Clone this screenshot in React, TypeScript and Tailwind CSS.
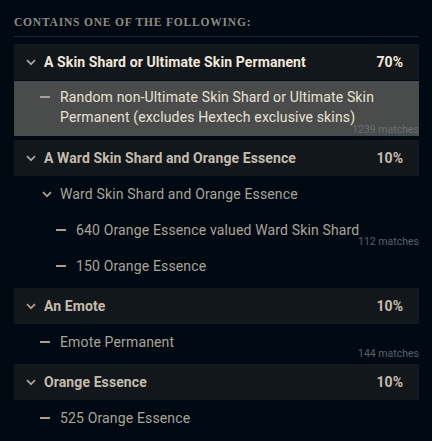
import React from "react";

const Chevron = ({ className = "" }: { className?: string }) => (
  <svg width="10" height="7" viewBox="0 0 10 7" className={className} fill="none">
    <path d="M1 1.2 L5 5.2 L9 1.2" stroke="currentColor" strokeWidth="1.7" />
  </svg>
);

const Dash = () => <span className="block w-[10px] h-[2px] bg-[#a7a193]" />;

const Matches = ({ n }: { n: string }) => (
  <span className="absolute right-0 bottom-0 text-[10.5px] leading-[12px] text-[#5b6066]">{n} matches</span>
);

type Child = { label: string; level: number; kind: "dash" | "chev"; matches?: string };

type Group = { title: string; pct: string; active?: boolean; children: Child[] };

const groups: Group[] = [
  {
    title: "A Skin Shard or Ultimate Skin Permanent",
    pct: "70%",
    active: true,
    children: [],
  },
  {
    title: "A Ward Skin Shard and Orange Essence",
    pct: "10%",
    children: [
      { label: "Ward Skin Shard and Orange Essence", level: 1, kind: "chev" },
      { label: "640 Orange Essence valued Ward Skin Shard", level: 2, kind: "dash", matches: "112" },
      { label: "150 Orange Essence", level: 2, kind: "dash" },
    ],
  },
  {
    title: "An Emote",
    pct: "10%",
    children: [{ label: "Emote Permanent", level: 1, kind: "dash", matches: "144" }],
  },
  {
    title: "Orange Essence",
    pct: "10%",
    children: [{ label: "525 Orange Essence", level: 1, kind: "dash" }],
  },
];

export default function App() {
  return (
    <div
      className="w-[432px] h-[441px] bg-[#010a13] pl-[14px] pr-[13px] pt-[15px] overflow-hidden"
      style={{ fontFamily: "Roboto, 'Liberation Sans', sans-serif" }}
    >
      <div
        className="text-[11.5px] leading-[14px] font-bold tracking-[0.07em] text-[#8e8b80] uppercase"
        style={{ fontFamily: "'Liberation Serif', 'DejaVu Serif', serif" }}
      >
        Contains one of the following:
      </div>
      <div className="h-px bg-[#1f262c] mt-[7px] mb-[7px]" />

      <div className="flex flex-col gap-1">
        {groups.map((g, i) => (
          <div key={i} className="flex flex-col">
            <div className="h-[36px] bg-[#12171c] flex items-center pl-[12px] pr-[16px]">
              <Chevron className="text-[#a7a193] mr-[8px]" />
              <span
                className={`flex-1 text-[14px] font-bold tracking-[0.1px] ${g.active ? "text-[#efe8d8]" : "text-[#c4bcab]"}`}
              >
                {g.title}
              </span>
              <span className={`text-[14px] font-bold ${g.active ? "text-[#efe8d8]" : "text-[#c4bcab]"}`}>
                {g.pct}
              </span>
            </div>
            {g.active && (
              <div className="relative mt-px bg-[#4a4c4c] pl-[26px] pr-[30px] pt-[6px] pb-[9px] flex items-start">
                <span className="mt-[9px] mr-[10px]">
                  <span className="block w-[10px] h-[2px] bg-[#a9a498]" />
                </span>
                <span className="text-[14px] leading-[20px] tracking-[0.15px] text-[#e8e2d2]">
                  Random non-Ultimate Skin Shard or Ultimate Skin Permanent (excludes Hextech exclusive skins)
                </span>
                <span className="absolute right-0 bottom-0 text-[10.5px] leading-[12px] text-[#6c6f70]">1239 matches</span>
              </div>
            )}
            {g.children.map((c, j) => (
              <div
                key={j}
                className={`relative h-[36px] flex items-center ${c.level === 1 ? "pl-[26px]" : "pl-[42px]"}`}
              >
                {c.kind === "chev" ? (
                  <Chevron className="text-[#a7a193] mr-[8px] ml-[2px]" />
                ) : (
                  <span className="mr-[10px]">
                    <Dash />
                  </span>
                )}
                <span className="text-[14px] leading-[20px] tracking-[0.15px] text-[#a9a495]">{c.label}</span>
                {c.matches && <Matches n={c.matches} />}
              </div>
            ))}
          </div>
        ))}
      </div>
    </div>
  );
}
